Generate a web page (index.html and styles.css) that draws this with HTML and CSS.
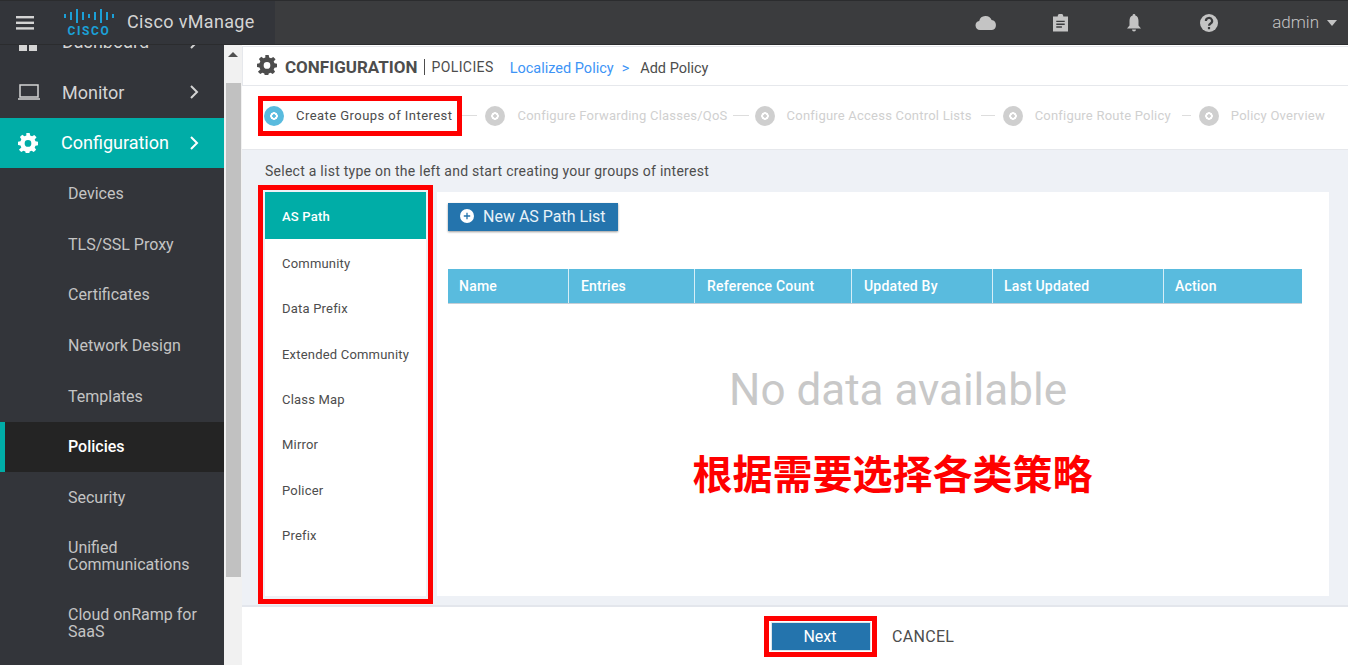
FILE: index.html
```html
<!DOCTYPE html>
<html lang="en">

<head>
    <meta charset="UTF-8">
    <title>Cisco vManage</title>
    <link rel="stylesheet" href="styles.css">
</head>

<body>
    <header class="topbar">
        <div class="brand">
            <svg class="burger" width="18" height="14" viewBox="0 0 18 14" fill="#d4d4d4">
                <rect x="0" y="0" width="18" height="2.4" />
                <rect x="0" y="5.6" width="18" height="2.4" />
                <rect x="0" y="11.2" width="18" height="2.4" />
            </svg>
            <div class="logo">
                <svg width="50" height="14" viewBox="0 0 50 14" fill="#1ba0d7">
                    <rect x="0" y="5" width="2" height="4" />
                    <rect x="6" y="3" width="2" height="8" />
                    <rect x="12" y="0" width="2" height="14" />
                    <rect x="18" y="3" width="2" height="8" />
                    <rect x="24" y="5" width="2" height="4" />
                    <rect x="30" y="3" width="2" height="8" />
                    <rect x="36" y="0" width="2" height="14" />
                    <rect x="42" y="3" width="2" height="8" />
                    <rect x="48" y="5" width="2" height="4" />
                </svg>
                <span class="logo-word">CISCO</span>
            </div>
            <span class="product">Cisco vManage</span>
        </div>
        <div class="top-icons">
            <svg class="icon-cloud" width="22" height="14" viewBox="0 0 22 14" fill="#c4c4c4">
                <path d="M5 14a4.600 4.600 0 0 1-.8-9.100A6.600 6.600 0 0 1 16.600 4 5.100 5.100 0 0 1 17 14z" />
            </svg>
            <svg class="icon-clip" width="15" height="18" viewBox="0 0 16 18">
                <path fill="#c4c4c4" d="M0 2h5a3 3 0 0 1 6 0h5v16H0z" />
                <path fill="#3b3c3e" d="M3.500 6.500h9V8h-9zM3.500 9.500h9V11h-9zM3.500 12.500h6V14h-6z" />
            </svg>
            <svg class="icon-bell" width="14" height="18" viewBox="0 0 14 18" fill="#c4c4c4">
                <path d="M7 0a1.300 1.300 0 0 1 1.300 1.500C10.800 2.200 11.500 4.500 11.500 7v4.500L14 14.500H0l2.500-3V7c0-2.500.7-4.800 3.200-5.500A1.300 1.300 0 0 1 7 0zM5 15.500h4a2 2 0 0 1-4 0z" />
            </svg>
            <svg class="icon-help" width="18" height="18" viewBox="0 0 18 18">
                <circle cx="9" cy="9" r="9" fill="#c4c4c4" />
                <path fill="none" stroke="#3b3c3e" stroke-width="2.200" d="M5.900 7a3.100 3 0 1 1 4.700 2.500C9.500 10.200 9 10.600 9 11.800" />
                <rect x="7.900" y="13" width="2.200" height="2.200" fill="#3b3c3e" />
            </svg>
            <span class="user">admin</span>
            <span class="caret"></span>
        </div>
    </header>

    <div class="shell">
        <nav class="sidebar">
            <ul class="nav">
                <li class="nav-item">
                    <svg class="nav-icon" width="20" height="20" viewBox="0 0 20 20" fill="#d4d4d4">
                        <rect x="1" y="1" width="8" height="8" />
                        <rect x="11" y="1" width="8" height="8" />
                        <rect x="1" y="11" width="8" height="8" />
                        <rect x="11" y="11" width="8" height="8" />
                    </svg>
                    <span class="nav-label">Dashboard</span>
                    <svg class="chevron" width="9" height="14" viewBox="0 0 9 14"><path d="M1 1l6 6-6 6" /></svg>
                </li>
                <li class="nav-item">
                    <svg class="nav-icon nav-icon-wide" width="24" height="16" viewBox="0 0 24 16" fill="none" stroke="#d4d4d4" stroke-width="1.500">
                        <rect x="3" y="1" width="18" height="12" />
                        <path d="M1 15h22" />
                    </svg>
                    <span class="nav-label">Monitor</span>
                    <svg class="chevron" width="9" height="14" viewBox="0 0 9 14"><path d="M1 1l6 6-6 6" /></svg>
                </li>
                <li class="nav-item nav-item-active">
                    <svg class="nav-icon" width="20" height="20" viewBox="0 0 24 24" fill="#fff">
                        <path fill-rule="evenodd" d="M10 0h4l.6 3 2.300 1 2.600-1.700 2.800 2.800L20 7.700l1 2.300 3 .6v4l-3 .6-1 2.300 1.700 2.600-2.800 2.800-2.600-1.700-2.300 1-.6 3h-4l-.6-3-2.300-1-2.600 1.700-2.800-2.800L4 17.300 3 15l-3-.6v-4l3-.6 1-2.300-1.700-2.600 2.800-2.800L7.700 4 10 3z M12 8.500a4 4 0 1 0 0 8 4 4 0 0 0 0-8z" />
                    </svg>
                    <span class="nav-label">Configuration</span>
                    <svg class="chevron" width="9" height="14" viewBox="0 0 9 14"><path d="M1 1l6 6-6 6" /></svg>
                </li>
                <li class="sub-item">Devices</li>
                <li class="sub-item">TLS/SSL Proxy</li>
                <li class="sub-item">Certificates</li>
                <li class="sub-item">Network Design</li>
                <li class="sub-item">Templates</li>
                <li class="sub-item sub-item-active">Policies</li>
                <li class="sub-item">Security</li>
                <li class="sub-item sub-item-tall">Unified Communications</li>
                <li class="sub-item sub-item-tall">Cloud onRamp for SaaS</li>
            </ul>
        </nav>

        <div class="scrollbar">
            <span class="scroll-arrow"></span>
            <span class="scroll-thumb"></span>
        </div>

        <main class="content">
            <div class="title-bar">
                <svg class="title-gear" width="20" height="20" viewBox="0 0 24 24" fill="#4d4d4d">
                    <path fill-rule="evenodd" d="M10 0h4l.6 3 2.300 1 2.600-1.700 2.800 2.800L20 7.700l1 2.300 3 .6v4l-3 .6-1 2.300 1.700 2.600-2.800 2.800-2.600-1.700-2.300 1-.6 3h-4l-.6-3-2.300-1-2.600 1.700-2.800-2.800L4 17.300 3 15l-3-.6v-4l3-.6 1-2.300-1.700-2.600 2.800-2.800L7.700 4 10 3z M12 8.500a4 4 0 1 0 0 8 4 4 0 0 0 0-8z" />
                </svg>
                <span class="title-main">CONFIGURATION</span>
                <span class="title-sub">POLICIES</span>
                <span class="crumb-link">Localized Policy</span>
                <span class="crumb-sep">&gt;</span>
                <span class="crumb-current">Add Policy</span>
            </div>

            <div class="steps">
                <div class="step step-current"><span class="step-dot"></span><span>Create Groups of Interest</span></div>
                <span class="step-line"></span>
                <div class="step"><span class="step-dot"></span><span>Configure Forwarding Classes/QoS</span></div>
                <span class="step-line"></span>
                <div class="step"><span class="step-dot"></span><span>Configure Access Control Lists</span></div>
                <span class="step-line"></span>
                <div class="step"><span class="step-dot"></span><span>Configure Route Policy</span></div>
                <span class="step-line"></span>
                <div class="step"><span class="step-dot"></span><span>Policy Overview</span></div>
            </div>

            <section class="workspace">
                <p class="hint">Select a list type on the left and start creating your groups of interest</p>
                <div class="panels">
                    <ul class="list-types">
                        <li class="list-type list-type-active">AS Path</li>
                        <li class="list-type">Community</li>
                        <li class="list-type">Data Prefix</li>
                        <li class="list-type">Extended Community</li>
                        <li class="list-type">Class Map</li>
                        <li class="list-type">Mirror</li>
                        <li class="list-type">Policer</li>
                        <li class="list-type">Prefix</li>
                    </ul>
                    <div class="list-panel">
                        <button class="new-btn">
                            <svg width="14" height="14" viewBox="0 0 14 14">
                                <circle cx="7" cy="7" r="7" fill="#fff" />
                                <path d="M7 3.800v6.400M3.800 7h6.400" stroke="#2474ad" stroke-width="1.300" />
                            </svg>
                            New AS Path List
                        </button>
                        <div class="table-head">
                            <div class="col col-name">Name</div>
                            <div class="col col-entries">Entries</div>
                            <div class="col col-ref">Reference Count</div>
                            <div class="col col-by">Updated By</div>
                            <div class="col col-last">Last Updated</div>
                            <div class="col col-action">Action</div>
                        </div>
                        <div class="no-data">No data available</div>
                        <div class="note">根据需要选择各类策略</div>
                    </div>
                </div>
            </section>

            <footer class="actions">
                <button class="next-btn">Next</button>
                <span class="cancel">CANCEL</span>
            </footer>
        </main>
    </div>

    <span class="mark mark-step"></span>
    <span class="mark mark-list"></span>
    <span class="mark mark-next"></span>
</body>

</html>
```

FILE: styles.css
```css
* {
    box-sizing: border-box;
}

html,
body {
    height: 100%;
}

body {
    margin: 0;
    overflow: hidden;
    font-family: Roboto, "Noto Sans CJK SC", sans-serif;
    background-color: #fff;
    color: #4d4d4d;
}

ul {
    list-style: none;
    margin: 0;
    padding: 0;
}

button {
    font-family: inherit;
    border: none;
}

.topbar {
    height: 45px;
    display: flex;
    justify-content: space-between;
    background-color: #3b3c3e;
    border-top: 1px solid #2b2c2e;
    border-bottom: 1px solid #2b2c2e;
}

.brand {
    width: 275px;
    display: flex;
    align-items: center;
    padding-left: 16px;
    background-color: #33353a;
}

.logo {
    width: 50px;
    margin-left: 30px;
    display: flex;
    flex-direction: column;
    align-items: center;
}

.logo-word {
    margin-top: 2px;
    font-size: 12px;
    line-height: 12px;
    font-weight: 700;
    letter-spacing: 1.6px;
    color: #1ba0d7;
}

.product {
    margin: -2px 0 0 13px;
    font-size: 18px;
    letter-spacing: 0.35px;
    color: #d4d4d4;
}

.top-icons {
    display: flex;
    align-items: center;
    padding-right: 11px;
}

.icon-clip {
    margin-left: 56px;
}

.icon-bell {
    margin-left: 59px;
}

.icon-help {
    margin-left: 59px;
}

.user {
    margin: -2px 0 0 54px;
    font-size: 17px;
    font-weight: 300;
    color: #c4c4c4;
}

.caret {
    margin-left: 8px;
    border-left: 5px solid transparent;
    border-right: 5px solid transparent;
    border-top: 6px solid #c4c4c4;
}

.shell {
    height: 620px;
    display: flex;
}

.sidebar {
    width: 224px;
    overflow: hidden;
    background-color: #33353a;
}

.nav {
    margin-top: -28.500px;
}

.nav-item {
    position: relative;
    height: 50.500px;
    display: flex;
    align-items: center;
    padding-left: 62px;
    font-size: 18px;
    color: #d4d4d4;
}

.nav-item-active {
    padding-left: 61px;
    background-color: #00ada7;
    color: #fff;
}

.nav-icon {
    position: absolute;
    left: 18px;
}

.nav-icon-wide {
    left: 17px;
}

.nav-label {
    flex: 1;
}

.chevron {
    margin-right: 25px;
    fill: none;
    stroke: #d4d4d4;
    stroke-width: 2;
}

.nav-item-active .chevron {
    stroke: #fff;
}

.sub-item {
    min-height: 50.800px;
    display: flex;
    align-items: center;
    padding: 0 20px 0 68px;
    font-size: 16px;
    line-height: 17px;
    color: #c4c4c4;
}

.sub-item-tall {
    padding-top: 16.500px;
    padding-bottom: 16.500px;
}

.sub-item-active {
    min-height: 50px;
    padding-left: 63px;
    border-left: 5px solid #00ada7;
    background-color: #242424;
    color: #fff;
    font-weight: 500;
}

.scrollbar {
    width: 18px;
    background-color: #f1f1f1;
}

.scroll-arrow {
    display: block;
    margin: 7px 0 0 4px;
    width: 0;
    border-left: 5px solid transparent;
    border-right: 5px solid transparent;
    border-bottom: 5px solid #505050;
}

.scroll-thumb {
    display: block;
    margin: 26px 0 0 2px;
    width: 15px;
    height: 494px;
    background-color: #c1c1c1;
}

.content {
    flex: 1;
    display: flex;
    flex-direction: column;
}

.title-bar {
    height: 40px;
    margin-top: 1px;
    display: flex;
    align-items: center;
    padding: 1px 0 0 14px;
    border: 1px solid #e6e8ec;
    border-right: none;
}

.title-gear {
    margin-top: -3px;
}

.title-main {
    margin-left: 8px;
    font-size: 17px;
    font-weight: 700;
    color: #4d4d4d;
}

.title-sub {
    margin-left: 7px;
    padding-left: 6px;
    border-left: 1px solid #4d4d4d;
    font-size: 14px;
    line-height: 16px;
    letter-spacing: 0.4px;
}

.crumb-link {
    margin: 4px 0 0 16px;
    font-size: 14.500px;
    color: #3d94f6;
}

.crumb-sep {
    margin: 4px 0 0 8px;
    font-size: 14.500px;
    color: #3d94f6;
}

.crumb-current {
    margin: 4px 0 0 11px;
    font-size: 14.500px;
}

.steps {
    height: 63px;
    display: flex;
    align-items: center;
    padding: 0 0 4px 22px;
    background-color: #fff;
    font-size: 13px;
    letter-spacing: 0.22px;
    color: #d0d0d0;
}

.step {
    display: flex;
    align-items: center;
}

.step-current {
    letter-spacing: 0.45px;
    color: #4d4d4d;
}

.step-dot {
    width: 20px;
    height: 20px;
    margin-right: 12px;
    border-radius: 50%;
    background: radial-gradient(circle, #cfcfcf 1.500px, #fff 2px, #fff 3.500px, #cfcfcf 4px);
}

.step-current .step-dot {
    background: radial-gradient(circle, #59bbde 1.500px, #fff 2px, #fff 3.500px, #59bbde 4px);
}

.step-line {
    height: 1px;
    background-color: #ddd;
}

.step-line:nth-child(2) {
    width: 15px;
    margin: 0 8px 0 10px;
}

.step-line:nth-child(4) {
    width: 16px;
    margin: 0 6px 0 5px;
}

.step-line:nth-child(6) {
    width: 14px;
    margin: 0 8px 0 9px;
}

.step-line:nth-child(8) {
    width: 9px;
    margin: 0 8px 0 11px;
}

.workspace {
    flex: 1;
    display: flex;
    flex-direction: column;
    padding: 13px 19px 9px 23px;
    background-color: #eef1f6;
    border-top: 1px solid #e6e8ec;
    border-bottom: 2px solid #e3e6ec;
}

.hint {
    margin: 0 0 13px;
    font-size: 14px;
    line-height: 16px;
    letter-spacing: 0.26px;
}

.panels {
    flex: 1;
    display: flex;
    gap: 11px;
}

.list-types {
    width: 161px;
    background-color: #fff;
}

.list-type {
    height: 45.300px;
    padding-left: 17px;
    display: flex;
    align-items: center;
    font-size: 13px;
    letter-spacing: 0.2px;
}

.list-type-active {
    height: 47px;
    margin-bottom: 2px;
    padding-top: 2px;
    background-color: #00ada7;
    color: #fff;
    font-weight: 500;
}

.list-panel {
    flex: 1;
    padding: 11px 27px 0 11px;
    background-color: #fff;
}

.new-btn {
    height: 28px;
    display: flex;
    align-items: center;
    gap: 9px;
    padding: 0 12px 2px;
    background-color: #2474ad;
    color: #e8f2f8;
    font-size: 16px;
    box-shadow: 0 1px 2px rgba(0, 0, 0, 0.4);
}

.table-head {
    margin-top: 38px;
    height: 35px;
    display: flex;
    background-color: #59bbde;
    border-bottom: 1px solid #c5ced6;
    color: #fff;
    font-size: 14px;
    font-weight: 500;
    letter-spacing: 0.2px;
}

.col {
    display: flex;
    align-items: center;
    padding-left: 11px;
    border-right: 1px solid #d6eef7;
}

.col-name {
    width: 121px;
    padding-right: 1px;
}

.col-entries {
    width: 126px;
    padding-left: 12px;
}

.col-ref {
    width: 157px;
    padding-left: 12px;
}

.col-by {
    width: 141px;
    padding-left: 12px;
}

.col-last {
    width: 171px;
}

.col-action {
    width: 138px;
    border-right: none;
}

.no-data {
    margin-top: 61px;
    padding-left: 46px;
    text-align: center;
    font-size: 44px;
    line-height: 50px;
    color: #c8c8c8;
}

.note {
    margin-top: 35px;
    padding-left: 35px;
    text-align: center;
    font-size: 40px;
    line-height: 52px;
    font-weight: 700;
    color: #f00;
}

.actions {
    height: 58px;
    display: flex;
    align-items: center;
    padding-left: 529px;
}

.next-btn {
    width: 100px;
    height: 29px;
    padding: 0 2px 0 0;
    background-color: #2474ad;
    border: 1px solid #dfe6ea;
    color: #fff;
    font-size: 16px;
}

.cancel {
    margin-left: 21px;
    font-size: 16px;
    letter-spacing: 0.3px;
}

/* red annotation boxes drawn over the page */
.mark {
    position: absolute;
    border: 5px solid #f00;
}

.mark-step {
    left: 258px;
    top: 96px;
    width: 204px;
    height: 40px;
}

.mark-list {
    left: 258px;
    top: 185px;
    width: 175px;
    height: 419px;
}

.mark-next {
    left: 764px;
    top: 616px;
    width: 113px;
    height: 41px;
}
```
